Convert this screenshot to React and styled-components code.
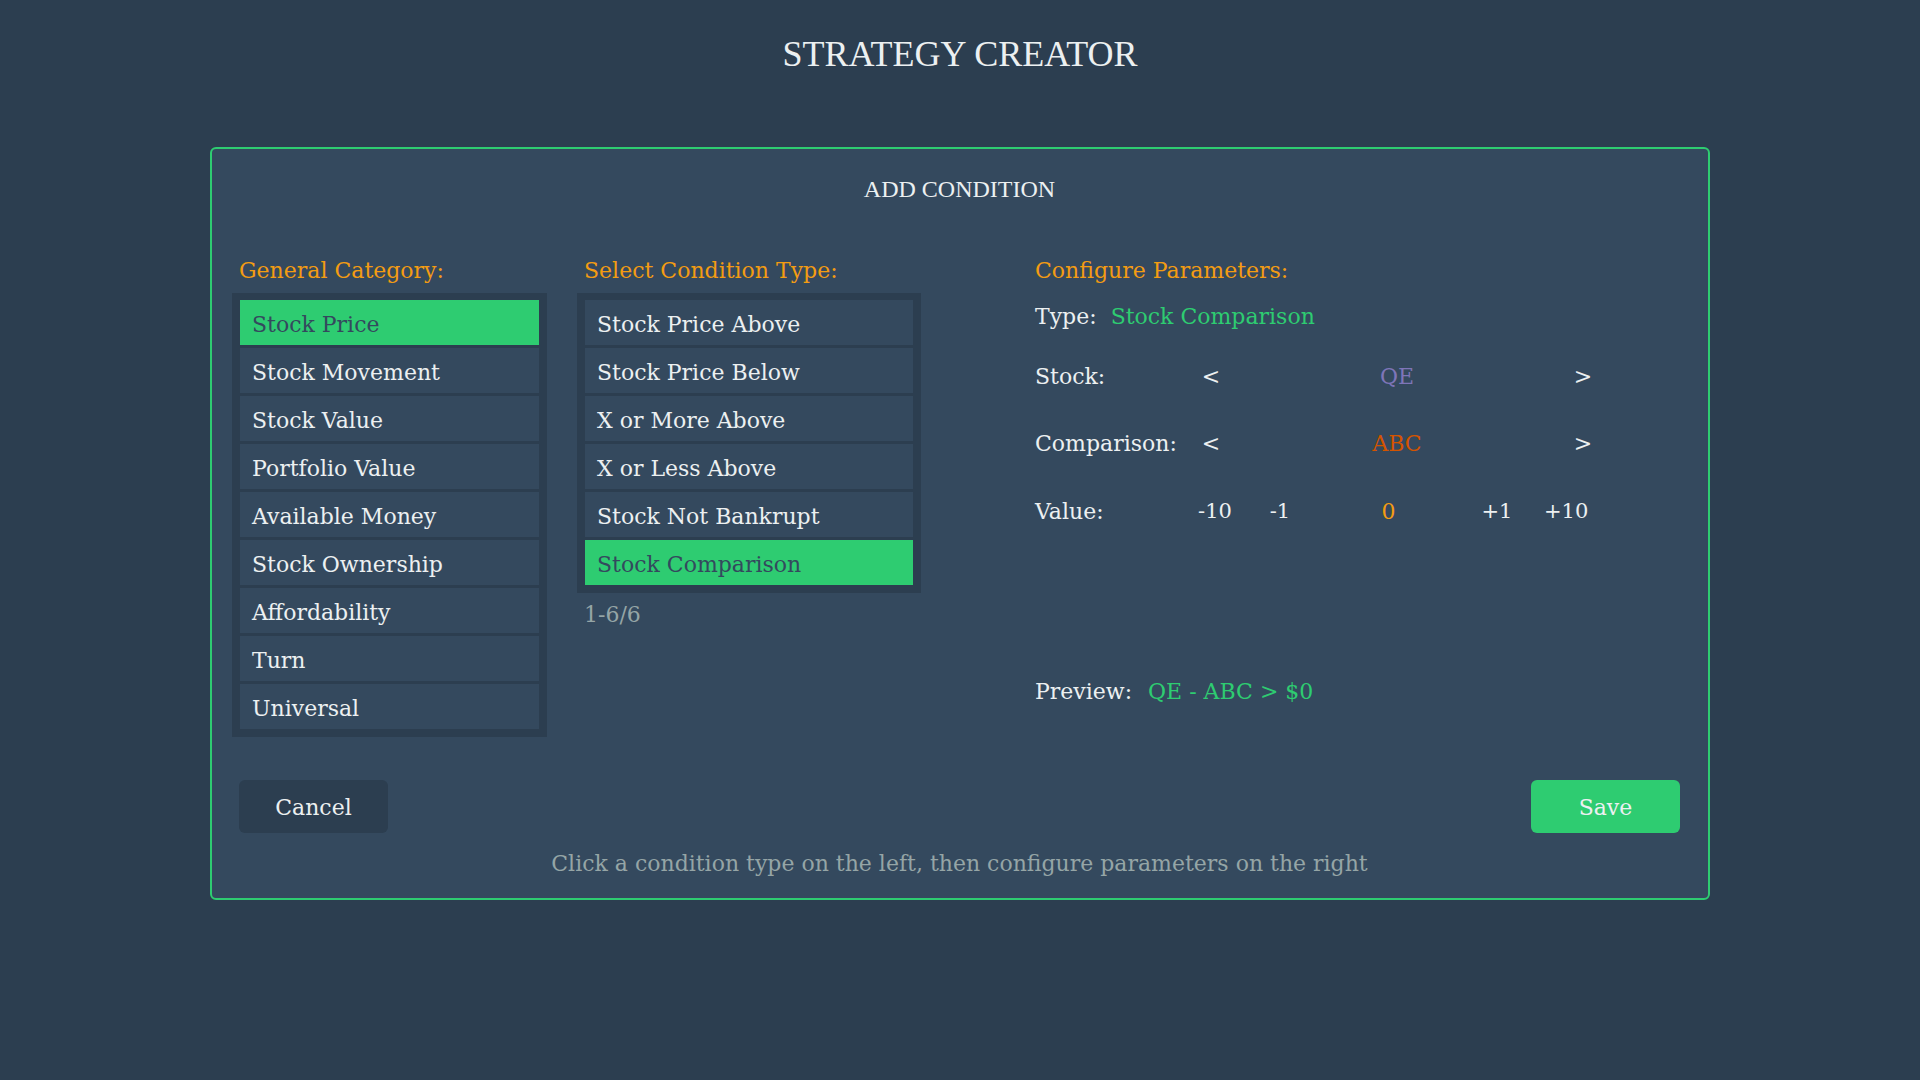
import React, { useState } from "react";
import styled, { createGlobalStyle } from "styled-components";

const colors = {
  page: "#2c3e50",
  panel: "#34495e",
  green: "#2ecc71",
  orange: "#f39c12",
  burnt: "#d35400",
  purple: "#7e75b8",
  light: "#ecf0f1",
  gray: "#95a5a6",
};

const GlobalStyle = createGlobalStyle`
  html, body {
    margin: 0;
    padding: 0;
    background: ${colors.page};
  }
  body {
    font-family: "DejaVu Serif", "Liberation Serif", serif;
    color: ${colors.light};
  }
`;

const Page = styled.div`
  min-height: 100vh;
  display: flex;
  flex-direction: column;
  align-items: center;
`;

const PageTitle = styled.h1`
  margin: 33px 0 72px;
  font-family: "Liberation Serif", "DejaVu Serif", serif;
  font-weight: 400;
  font-size: 36px;
  line-height: 42px;
  color: ${colors.light};
`;

const Modal = styled.div`
  width: 1500px;
  box-sizing: border-box;
  border: 2px solid ${colors.green};
  border-radius: 6px;
  background: ${colors.panel};
  padding: 26px 28px 21px 27px;
  display: flex;
  flex-direction: column;
`;

const ModalTitle = styled.div`
  text-align: center;
  font-family: "Liberation Serif", "DejaVu Serif", serif;
  font-size: 24px;
  line-height: 28px;
  margin-bottom: 55px;
`;

const Columns = styled.div`
  display: grid;
  grid-template-columns: 315px 344px 1fr;
  column-gap: 30px;
  margin-left: -7px;
  align-items: start;
`;

const Column = styled.div`
  display: flex;
  flex-direction: column;
  margin-left: ${({ $offset }) => $offset || 0}px;
`;

const Heading = styled.div`
  color: ${colors.orange};
  font-size: 22px;
  line-height: 26px;
  padding-left: ${({ $indent }) => ($indent ? 7 : 0)}px;
  margin-bottom: 9px;
`;

const ListBox = styled.div`
  background: ${colors.page};
  padding: 7px 8px 8px;
  display: flex;
  flex-direction: column;
  gap: 3px;
`;

const ListItem = styled.div`
  height: 45px;
  display: flex;
  align-items: center;
  padding: 3px 0 0 12px;
  box-sizing: border-box;
  font-size: 22px;
  cursor: pointer;
  background: ${({ $active }) => ($active ? colors.green : colors.panel)};
  color: ${({ $active }) => ($active ? colors.panel : colors.light)};
`;

const PageCount = styled.div`
  margin-top: 9px;
  padding-left: 7px;
  font-size: 22px;
  line-height: 26px;
  color: ${colors.gray};
`;

const ParamRow = styled.div`
  height: 40px;
  display: flex;
  align-items: center;
  font-size: 22px;
  margin-top: ${({ $top }) => $top || 0}px;
`;

const Label = styled.span`
  width: ${({ $width }) => ($width ? `${$width}px` : "auto")};
  flex-shrink: 0;
  margin-right: ${({ $gap }) => $gap || 0}px;
`;

const Accent = styled.span`
  color: ${({ $color }) => $color};
`;

const Step = styled.span`
  width: ${({ $width }) => $width || 40}px;
  margin-left: ${({ $left }) => $left || 0}px;
  text-align: center;
  flex-shrink: 0;
  cursor: pointer;
  font-size: ${({ $small }) => ($small ? 21 : 22)}px;
`;

const CenterValue = styled.span`
  width: ${({ $width }) => $width}px;
  text-align: center;
  flex-shrink: 0;
  color: ${({ $color }) => $color};
`;

const Footer = styled.div`
  display: flex;
  justify-content: space-between;
  margin-top: 43px;
`;

const Button = styled.button`
  width: 149px;
  height: 53px;
  border: none;
  border-radius: 6px;
  font-family: "DejaVu Serif", serif;
  font-size: 22px;
  padding-top: 3px;
  color: ${colors.light};
  background: ${({ $primary }) => ($primary ? colors.green : colors.page)};
  cursor: pointer;
`;

const Hint = styled.div`
  margin-top: 18px;
  text-align: center;
  font-size: 22px;
  line-height: 26px;
  color: ${colors.gray};
`;

const categories = [
  "Stock Price",
  "Stock Movement",
  "Stock Value",
  "Portfolio Value",
  "Available Money",
  "Stock Ownership",
  "Affordability",
  "Turn",
  "Universal",
];

const conditionTypes = [
  "Stock Price Above",
  "Stock Price Below",
  "X or More Above",
  "X or Less Above",
  "Stock Not Bankrupt",
  "Stock Comparison",
];

export default function App() {
  const [category, setCategory] = useState("Stock Price");
  const [type, setType] = useState("Stock Comparison");

  return (
    <Page>
      <GlobalStyle />
      <PageTitle>STRATEGY CREATOR</PageTitle>
      <Modal>
        <ModalTitle>ADD CONDITION</ModalTitle>
        <Columns>
          <Column>
            <Heading $indent>General Category:</Heading>
            <ListBox>
              {categories.map((c) => (
                <ListItem key={c} $active={c === category} onClick={() => setCategory(c)}>
                  {c}
                </ListItem>
              ))}
            </ListBox>
          </Column>
          <Column>
            <Heading $indent>Select Condition Type:</Heading>
            <ListBox>
              {conditionTypes.map((t) => (
                <ListItem key={t} $active={t === type} onClick={() => setType(t)}>
                  {t}
                </ListItem>
              ))}
            </ListBox>
            <PageCount>1-6/6</PageCount>
          </Column>
          <Column $offset={84}>
            <Heading>Configure Parameters:</Heading>
            <ParamRow $top={3}>
              <Label $gap={14}>Type:</Label>
              <Accent $color={colors.green}>{type}</Accent>
            </ParamRow>
            <ParamRow $top={20}>
              <Label $width={160}>Stock:</Label>
              <Step $width={32}>&lt;</Step>
              <CenterValue $width={340} $color={colors.purple}>QE</CenterValue>
              <Step $width={32}>&gt;</Step>
            </ParamRow>
            <ParamRow $top={27}>
              <Label $width={160}>Comparison:</Label>
              <Step $width={32}>&lt;</Step>
              <CenterValue $width={340} $color={colors.burnt}>ABC</CenterValue>
              <Step $width={32}>&gt;</Step>
            </ParamRow>
            <ParamRow $top={28}>
              <Label $width={160}>Value:</Label>
              <Step $small>-10</Step>
              <Step $small $left={25}>-1</Step>
              <CenterValue $width={177} $color={colors.orange}>0</CenterValue>
              <Step $small>+1</Step>
              <Step $small $left={27}>+10</Step>
            </ParamRow>
            <ParamRow $top={140}>
              <Label $gap={16}>Preview:</Label>
              <Accent $color={colors.green}>QE - ABC &gt; $0</Accent>
            </ParamRow>
          </Column>
        </Columns>
        <Footer>
          <Button>Cancel</Button>
          <Button $primary>Save</Button>
        </Footer>
        <Hint>Click a condition type on the left, then configure parameters on the right</Hint>
      </Modal>
    </Page>
  );
}
